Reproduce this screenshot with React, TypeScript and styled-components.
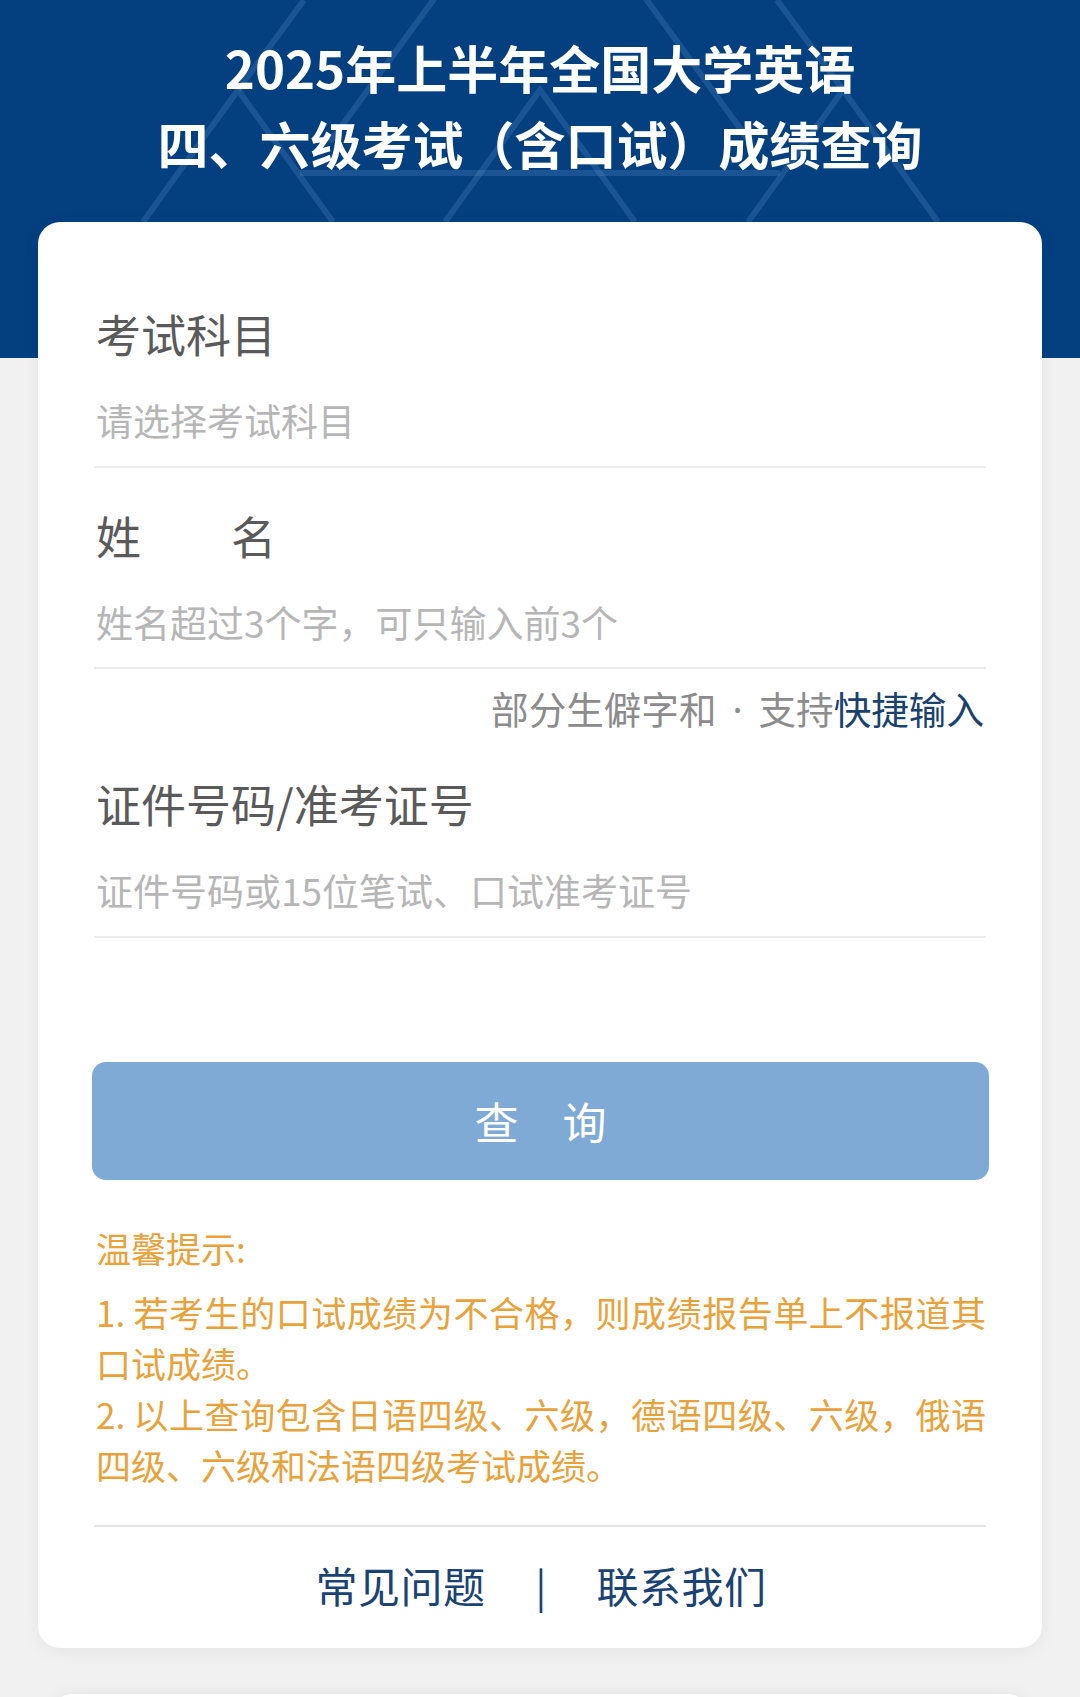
import React from "react";
import styled, { createGlobalStyle } from "styled-components";

const GlobalStyle = createGlobalStyle`
  html, body {
    margin: 0;
    padding: 0;
    background: #f1f1f1;
  }
  body {
    font-family: "Noto Sans CJK SC", "Noto Sans", sans-serif;
    -webkit-font-smoothing: antialiased;
  }
  * { box-sizing: border-box; }
`;

const Page = styled.div`
  width: 1080px;
  min-height: 1697px;
  overflow: hidden;
  background: linear-gradient(#043f80 0, #043f80 358px, #f1f1f1 358px);
`;

const Header = styled.header`
  position: relative;
  height: 222px;
`;

const Pattern = styled.svg`
  position: absolute;
  left: 0;
  top: 0;
  width: 1080px;
  height: 222px;
  pointer-events: none;
`;

const Title = styled.h1`
  position: relative;
  margin: 0;
  padding-top: 29px;
  text-align: center;
  color: #ffffff;
  font-size: 51px;
  font-weight: 700;
  line-height: 76px;
`;

const Card = styled.main`
  margin: 0 38px;
  background: #ffffff;
  border-radius: 22px;
  padding: 82px 56px 0 58px;
  height: 1426px;
  box-shadow: 0 4px 18px rgba(0, 0, 0, 0.05);
  display: flex;
  flex-direction: column;
`;

const Field = styled.div<{ $gapTop?: number }>`
  display: flex;
  flex-direction: column;
  margin-top: ${(p) => p.$gapTop ?? 0}px;
`;

const Label = styled.label`
  font-size: 45px;
  line-height: 60px;
  color: #5a5a5a;
  white-space: pre;
`;

const Input = styled.div`
  margin-top: 26px;
  height: 60px;
  font-size: 37px;
  line-height: 60px;
  color: #b6b6b6;
`;

const Divider = styled.div<{ $gap?: number }>`
  margin-top: ${(p) => p.$gap ?? 15}px;
  margin-left: -2px;
  height: 2px;
  background: #ebebeb;
`;

const Hint = styled.div`
  margin-top: 14px;
  text-align: right;
  font-size: 37.6px;
  line-height: 50px;
  color: #8c8c8c;
  padding-right: 2px;
`;

const Dot = styled.span`
  display: inline-block;
  width: 42px;
  text-align: center;
  font-family: "Noto Sans", sans-serif;
`;

const HintLink = styled.span`
  color: #1b416e;
`;

const QueryButton = styled.button`
  margin: 124px -3px 0 -4px;
  height: 118px;
  border: none;
  border-radius: 14px;
  background: #7eaad5;
  color: #ffffff;
  font-family: "Noto Sans CJK SC", sans-serif;
  font-size: 44px;
  white-space: pre;
  cursor: pointer;
`;

const Tips = styled.section`
  margin-top: 42px;
  color: #e9a23b;
  font-size: 35px;
  line-height: 51px;
  text-align: justify;
`;

const TipsTitle = styled.div`
  margin-bottom: 13px;
`;

const TipsItem = styled.p`
  margin: 0;
`;

const FooterLine = styled.div`
  margin-top: 35px;
  height: 2px;
  background: #e3e3e3;
  margin-left: -2px;
`;

const FooterLinks = styled.nav`
  margin-top: 30px;
  display: flex;
  justify-content: center;
  align-items: center;
  gap: 50px;
  font-size: 42px;
  line-height: 56px;
  color: #1a4273;
`;

const LinkText = styled.span`
  letter-spacing: 0.5px;
`;

const Sep = styled.span`
  font-size: 40px;
`;

const NextCard = styled.div`
  margin: 46px 52px 0;
  height: 40px;
  background: #ffffff;
  border-radius: 22px;
  box-shadow: 0 -2px 14px rgba(0, 0, 0, 0.05);
`;

const triangles: Array<[number, number]> = [
  [238, 90],
  [540, 90],
  [843, 90],
];

export default function App() {
  return (
    <>
      <GlobalStyle />
      <Page>
        <Header>
          <Pattern viewBox="0 0 1080 222" aria-hidden="true">
            <g fill="none" stroke="rgba(120,170,220,0.2)" strokeWidth="6">
              {triangles.map(([x, y]) => (
                <polyline
                  key={`t${x}`}
                  points={`${x - 95},${y + 132} ${x},${y} ${x + 95},${y + 132}`}
                />
              ))}
              <polyline points="304,0 238,90" />
              <polyline points="455,-30 330,142" />
              <polyline points="625,-30 750,142" />
              <polyline points="777,0 843,90" />
              <line x1="300" y1="173" x2="780" y2="173" />
            </g>
          </Pattern>
          <Title>
            2025年上半年全国大学英语
            <br />
            四、六级考试（含口试）成绩查询
          </Title>
        </Header>
        <Card>
          <Field>
            <Label>考试科目</Label>
            <Input>请选择考试科目</Input>
          </Field>
          <Divider $gap={16} />
          <Field $gapTop={38}>
            <Label>{"姓　　名"}</Label>
            <Input>姓名超过3个字，可只输入前3个</Input>
          </Field>
          <Divider $gap={15} />
          <Hint>
            部分生僻字和<Dot>·</Dot>支持<HintLink>快捷输入</HintLink>
          </Hint>
          <Field $gapTop={39}>
            <Label>证件号码/准考证号</Label>
            <Input>证件号码或15位笔试、口试准考证号</Input>
          </Field>
          <Divider $gap={16} />
          <QueryButton type="button">{"查　询"}</QueryButton>
          <Tips>
            <TipsTitle>温馨提示:</TipsTitle>
            <TipsItem>1. 若考生的口试成绩为不合格，则成绩报告单上不报道其口试成绩。</TipsItem>
            <TipsItem>2. 以上查询包含日语四级、六级，德语四级、六级，俄语四级、六级和法语四级考试成绩。</TipsItem>
          </Tips>
          <FooterLine />
          <FooterLinks>
            <LinkText>常见问题</LinkText>
            <Sep>|</Sep>
            <LinkText>联系我们</LinkText>
          </FooterLinks>
        </Card>
        <NextCard />
      </Page>
    </>
  );
}
